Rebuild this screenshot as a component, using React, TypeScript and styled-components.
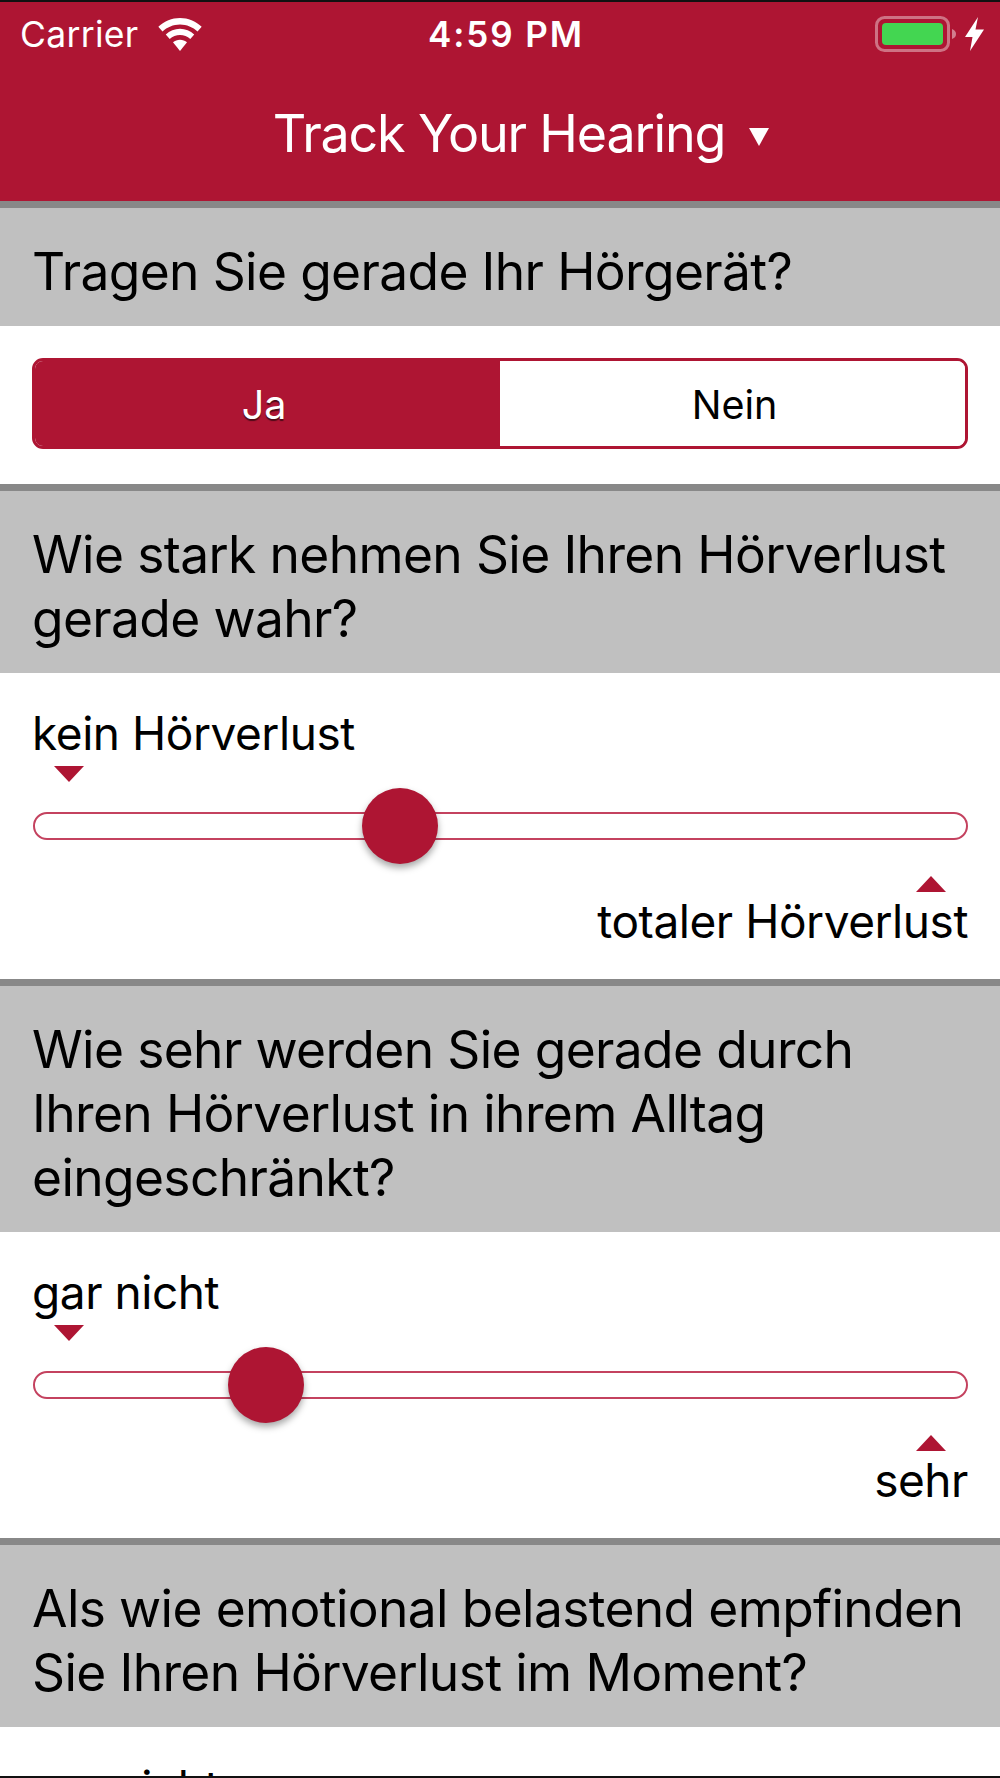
import React from "react";
import styled, { createGlobalStyle } from "styled-components";

const RED = "#ae1533";

const Global = createGlobalStyle`
  html, body { margin: 0; padding: 0; background: #fff; }
  body { font-family: Inter, "Liberation Sans", sans-serif; }
`;

const Screen = styled.div`
  box-sizing: border-box;
  width: 1000px;
  height: 1778px;
  overflow: hidden;
  border-top: 2px solid #111;
  border-bottom: 2px solid #111;
  background: #fff;
  color: #000;
`;

const NavArea = styled.header`
  background: ${RED};
  height: 199px;
  color: #fff;
  display: flex;
  flex-direction: column;
`;

const StatusBar = styled.div`
  height: 64px;
  padding: 0 16px 0 20px;
  display: grid;
  grid-template-columns: 1fr auto 1fr;
  align-items: center;
`;

const StatusLeft = styled.div`
  display: flex;
  align-items: center;
  gap: 20px;
`;

const Carrier = styled.span`
  font-size: 35.5px;
  letter-spacing: 0.3px;
`;

const Clock = styled.span`
  padding-left: 8px;
  font-size: 35px;
  font-weight: 600;
  letter-spacing: 1.9px;
`;

const StatusRight = styled.div`
  display: flex;
  align-items: center;
  justify-content: flex-end;
  gap: 8px;
`;

const Title = styled.div`
  flex: 1;
  display: flex;
  align-items: center;
  justify-content: center;
  gap: 24px;
  padding: 0 0 0 42px;
  font-size: 52px;
  letter-spacing: -1.2px;
`;

const Caret = styled.span`
  width: 0;
  height: 0;
  margin-top: 6px;
  border-left: 10px solid transparent;
  border-right: 10px solid transparent;
  border-top: 18px solid #fff;
`;

const QuestionHeader = styled.h2`
  margin: 0;
  background: #c0c0c0;
  border-top: 7px solid #888;
  padding: 31px 32px 23px 32px;
  font-size: 51.5px;
  font-weight: 400;
  letter-spacing: -0.64px;
  line-height: 64px;
`;

const Body = styled.section<{ $h: number }>`
  box-sizing: border-box;
  height: ${(p) => p.$h}px;
  padding: 0 32px;
`;

const SegmentBody = styled(Body)`
  padding-top: 32px;
`;

const Segment = styled.div`
  box-sizing: border-box;
  height: 91px;
  display: flex;
  border: 3px solid ${RED};
  border-radius: 11px;
  overflow: hidden;
`;

const SegmentOption = styled.div<{ $on?: boolean }>`
  box-sizing: border-box;
  flex: 0 0 50%;
  display: flex;
  align-items: center;
  justify-content: center;
  padding: ${(p) => (p.$on ? "3px 7px 0 0" : "3px 0 0 4px")};
  font-size: 39.5px;
  background: ${(p) => (p.$on ? RED : "#fff")};
  color: ${(p) => (p.$on ? "#fff" : "#000")};
  text-shadow: ${(p) => (p.$on ? "0 2px 1px rgba(0,0,0,.55)" : "none")};
`;

const Label = styled.div<{ $right?: boolean }>`
  font-size: 46px;
  letter-spacing: -0.45px;
  line-height: 56px;
  text-align: ${(p) => (p.$right ? "right" : "left")};
`;

const SliderBody = styled(Body)`
  padding-top: 32px;
`;

const Marker = styled.div<{ $up?: boolean }>`
  width: 0;
  height: 0;
  border-left: 15px solid transparent;
  border-right: 15px solid transparent;
  ${(p) =>
    p.$up
      ? `border-bottom: 16px solid ${RED}; margin: 0 22px 1px auto;`
      : `border-top: 16px solid ${RED}; margin: 5px 0 0 22px;`}
`;

const Track = styled.div`
  position: relative;
  box-sizing: border-box;
  height: 28px;
  margin: 30px 0 36px 1px;
  border: 2px solid #c4425f;
  border-radius: 14px;
  background: #fff;
`;

const Thumb = styled.div`
  position: absolute;
  top: -26px;
  width: 76px;
  height: 76px;
  border-radius: 50%;
  background: ${RED};
  box-shadow: 0 4px 7px rgba(0, 0, 0, 0.35);
`;

const Wifi = () => (
  <svg width="44" height="33" viewBox="0 0 42 32" fill="#fff">
    <path d="M21 0C13 0 6 3 0 8.500L4 13C8.500 9 14.500 6.300 21 6.300S33.500 9 38 13L42 8.500C36 3 29 0 21 0Z" />
    <path d="M21 10.500C15.800 10.500 11 12.500 7.200 16L11 20.300C13.800 17.900 17.300 16.500 21 16.500S28.200 17.900 31 20.300L34.800 16C31 12.500 26.200 10.500 21 10.500Z" />
    <path d="M21 21C18.500 21 16 21.900 14.200 23.600L21 32L27.800 23.600C26 21.900 23.500 21 21 21Z" />
  </svg>
);

const Battery = () => (
  <svg width="82" height="36" viewBox="0 0 82 36">
    <rect x="1.500" y="1.500" width="72" height="33" rx="8" fill="none" stroke="#fff" strokeOpacity="0.4" strokeWidth="3" />
    <rect x="7" y="7" width="61" height="22" rx="4" fill="#43d651" />
    <path d="M77 13C80 14 81 16 81 18S80 22 77 23Z" fill="#fff" fillOpacity="0.45" />
  </svg>
);

const Bolt = () => (
  <svg width="19" height="34" viewBox="0 0 19 34" fill="#fff">
    <path d="M13 0L0 20H7.500L5 34L19 12.500H10.500Z" />
  </svg>
);

function Slider({ low, high, pos }: { low: string; high: string; pos: number }) {
  return (
    <SliderBody $h={306}>
      <Label>{low}</Label>
      <Marker />
      <Track>
        <Thumb style={{ left: pos }} />
      </Track>
      <Marker $up />
      <Label $right>{high}</Label>
    </SliderBody>
  );
}

export default function App() {
  return (
    <Screen>
      <Global />
      <NavArea>
        <StatusBar>
          <StatusLeft>
            <Carrier>Carrier</Carrier>
            <Wifi />
          </StatusLeft>
          <Clock>4:59 PM</Clock>
          <StatusRight>
            <Battery />
            <Bolt />
          </StatusRight>
        </StatusBar>
        <Title>
          <span>Track Your Hearing</span>
          <Caret />
        </Title>
      </NavArea>

      <QuestionHeader>Tragen Sie gerade Ihr Hörgerät?</QuestionHeader>
      <SegmentBody $h={158}>
        <Segment>
          <SegmentOption $on>Ja</SegmentOption>
          <SegmentOption>Nein</SegmentOption>
        </Segment>
      </SegmentBody>

      <QuestionHeader>
        Wie stark nehmen Sie Ihren Hörverlust
        <br />
        gerade wahr?
      </QuestionHeader>
      <Slider low="kein Hörverlust" high="totaler Hörverlust" pos={327} />

      <QuestionHeader>
        Wie sehr werden Sie gerade durch
        <br />
        Ihren Hörverlust in ihrem Alltag
        <br />
        eingeschränkt?
      </QuestionHeader>
      <Slider low="gar nicht" high="sehr" pos={193} />

      <QuestionHeader>
        Als wie emotional belastend empfinden
        <br />
        Sie Ihren Hörverlust im Moment?
      </QuestionHeader>
      <SliderBody $h={60}>
        <Label>gar nicht</Label>
      </SliderBody>
    </Screen>
  );
}
